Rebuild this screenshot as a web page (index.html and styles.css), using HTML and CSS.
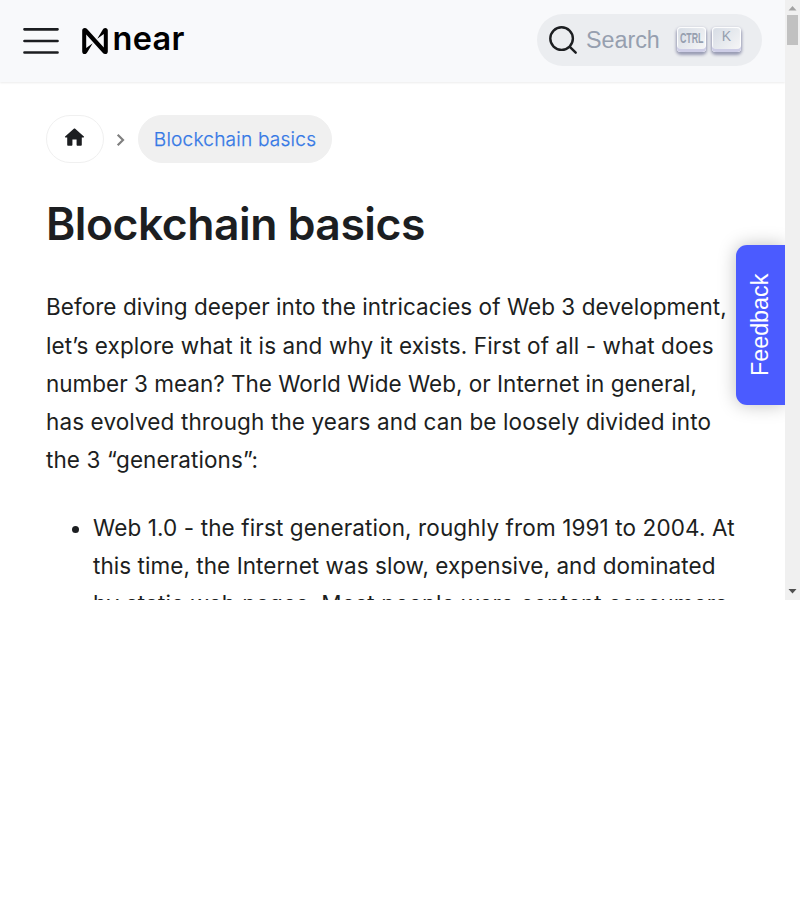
FILE: index.html
```html
<!DOCTYPE html>
<html lang="en">
<head>
<meta charset="utf-8">
<title>Blockchain basics</title>
<link rel="stylesheet" href="styles.css">
</head>
<body>
<div class="window">
  <div class="page">
    <header class="navbar">
      <svg class="menu" width="36" height="30" viewBox="0 0 36 30"><path d="M1.500 3.300h33M1.500 15h33M1.500 26.500h33" /></svg>
      <a class="brand">
        <svg class="mark" width="26" height="26" viewBox="0 0 26 26"><path d="M2.700 0C3.800 0 4.600.4 5.300 1.200L21.800 19.600V5.900L15.300 10.800L20.400 2.300C21.300.8 22 0 23.300 0 24.800 0 25.800 1 25.800 2.600V23.400C25.800 25 24.800 26 23.200 26 22.200 26 21.400 25.600 20.700 24.800L4.200 6.400V20.100L10.700 15.200L5.600 23.700C4.700 25.200 4 26 2.700 26 1.200 26 .2 25 .2 23.400V2.600C.2 1 1.200 0 2.700 0z"/></svg>
        <span class="wordmark">near</span>
      </a>
      <div class="search">
        <svg class="lens" width="30" height="30" viewBox="0 0 20 20"><path d="M14.386 14.386l4.0877 4.0877-4.0877-4.0877c-2.9418 2.9419-7.7115 2.9419-10.6533 0-2.9419-2.9418-2.9419-7.7115 0-10.6533 2.9418-2.9419 7.7115-2.9419 10.6533 0 2.9419 2.9418 2.9419 7.7115 0 10.6533z"/></svg>
        <span class="placeholder">Search</span>
        <span class="key ctrl"><span class="narrow">CTRL</span></span>
        <span class="key">K</span>
      </div>
    </header>
    <main class="content">
      <nav class="crumbs">
        <a class="crumb home"><svg width="25" height="25" viewBox="0 0 24 24"><path d="M10 19v-5h4v5c0 .55.45 1 1 1h3c.55 0 1-.45 1-1v-7h1.700c.46 0 .68-.57.33-.87L12.670 3.600c-.38-.34-.96-.34-1.340 0l-8.360 7.530c-.34.3-.13.87.33.87H5v7c0 .55.45 1 1 1h3c.55 0 1-.45 1-1z"/></svg></a>
        <svg class="sep" width="10" height="14" viewBox="0 0 10 14"><path d="M1.700 1.700L7 7l-5.300 5.300"/></svg>
        <a class="crumb active">Blockchain basics</a>
      </nav>
      <h1>Blockchain basics</h1>
      <p><span class="s1">Before diving deeper into the intricacies of Web 3 development,</span><br><span class="s2">let’s explore what it is and why it exists. First of all - what does</span><br>number 3 mean? The World Wide Web, or Internet in general,<br><span class="s3">has evolved through the years and can be loosely divided into</span><br><span class="s2">the 3 “generations”:</span></p>
      <ul>
        <li><span class="s3">Web 1.0 - the first generation, roughly from 1991 to 2004. At</span><br><span class="s1">this time, the Internet was slow, expensive, and dominated</span><br><span class="s3">by static web pages. Most people were content consumers</span></li>
      </ul>
    </main>
  </div>
  <div class="scrollbar">
    <svg width="9" height="5" viewBox="0 0 9 5"><path fill="#a3a3a3" d="M4.500 0L8.500 4.500h-8z"/></svg>
    <div class="thumb"></div>
    <svg class="down" width="9" height="5" viewBox="0 0 9 5"><path fill="#505050" d="M.5 0h8l-4 4.500z"/></svg>
  </div>
  <div class="feedback">Feedback</div>
</div>
</body>
</html>
```

FILE: styles.css
```css
* { box-sizing: border-box; }
body { margin: 0; background: #fff; color: #1c1e21; font-family: Inter, sans-serif; }
.window { position: relative; display: flex; width: 800px; height: 600px; overflow: hidden; }
.page { width: 785px; height: 600px; overflow: hidden; }
.navbar { display: flex; align-items: center; height: 82px; padding: 0 23px 2px; background: #f8f9fb; box-shadow: 0 1px 2px rgba(0,0,0,.08); }
.menu { flex: none; margin-top: 2px; fill: none; stroke: #1c1e21; stroke-width: 2.700; stroke-linecap: round; }
.brand { display: flex; align-items: center; margin: 1px 0 0 22.500px; height: 30px; color: #000; }
.mark { fill: #000; }
.wordmark { margin: -4px 0 0 5px; font-size: 32.500px; font-weight: 600; line-height: 36px; letter-spacing: .3px; }
.search { display: flex; align-items: center; margin-left: auto; width: 225px; height: 52px; padding: 0 21px 0 10.500px; border-radius: 26px; background: #ebedf0; color: #969faf; font-family: "Liberation Sans", sans-serif; }
.lens { flex: none; fill: none; stroke: #1c1e21; stroke-width: 1.600; stroke-linejoin: round; stroke-linecap: round; }
.placeholder { margin: 0 auto 0 8.500px; font-size: 23.300px; line-height: 30px; }
.key { display: flex; align-items: center; justify-content: center; width: 29px; height: 25px; margin: 0 0 2px 6px; padding-bottom: 6px; border-radius: 4px; background: linear-gradient(-225deg, #d5dbe4, #f8f8f8); box-shadow: inset 0 -3px 0 #cdcde6, inset 0 0 1px 1px #fff, 0 2px 3px 1px rgba(30,35,90,.4); font-size: 14px; }
.ctrl { padding-bottom: 2px; }
.narrow { font-weight: 700; font-size: 15.500px; transform: scaleX(.57); }
.content { padding: 33px 46px 0; }
.crumbs { display: flex; align-items: center; height: 48px; }
.crumb { display: flex; align-items: center; justify-content: center; height: 48px; border: 1px solid #f0f0f0; border-radius: 24px; font-size: 19.100px; }
.home { width: 58px; padding: 0 1px 3px 0; fill: #1c1e21; }
.sep { margin: 2px 12px 0; fill: none; stroke: #808080; stroke-width: 2.200; }
.active { width: 194px; background: #f0f0f0; color: #3578e5; font-weight: 300; letter-spacing: .2px; -webkit-text-stroke: .25px #3578e5; }
h1 { margin: 33px 0 0; font-size: 44.500px; font-weight: 600; line-height: 56px; letter-spacing: -.5px; white-space: nowrap; }
p { margin: 36.400px 0 0; font-size: 22.500px; line-height: 38.250px; white-space: nowrap; }
ul { margin: 29px 0 0; padding-left: 47px; font-size: 22.500px; line-height: 38.250px; white-space: nowrap; }
.s1 { letter-spacing: .05px; }
.s2 { letter-spacing: .09px; }
.s3 { letter-spacing: .12px; }
.scrollbar { display: flex; flex-direction: column; align-items: center; width: 15px; height: 600px; padding: 6px 0; background: #f0f0f0; }
.thumb { width: 11px; height: 30px; margin-top: 4px; background: #c1c1c1; }
.down { margin-top: auto; }
.feedback { position: absolute; top: 244.500px; right: 15px; width: 49px; height: 160px; display: flex; align-items: center; justify-content: center; writing-mode: vertical-rl; transform: rotate(180deg); border-radius: 0 11px 11px 0; background: #4b5bff; color: #fff; font: 23.300px "Liberation Sans", sans-serif; box-shadow: 0 0 18px rgba(0,0,0,.25); clip-path: inset(-30px -30px -30px 0); }
```
